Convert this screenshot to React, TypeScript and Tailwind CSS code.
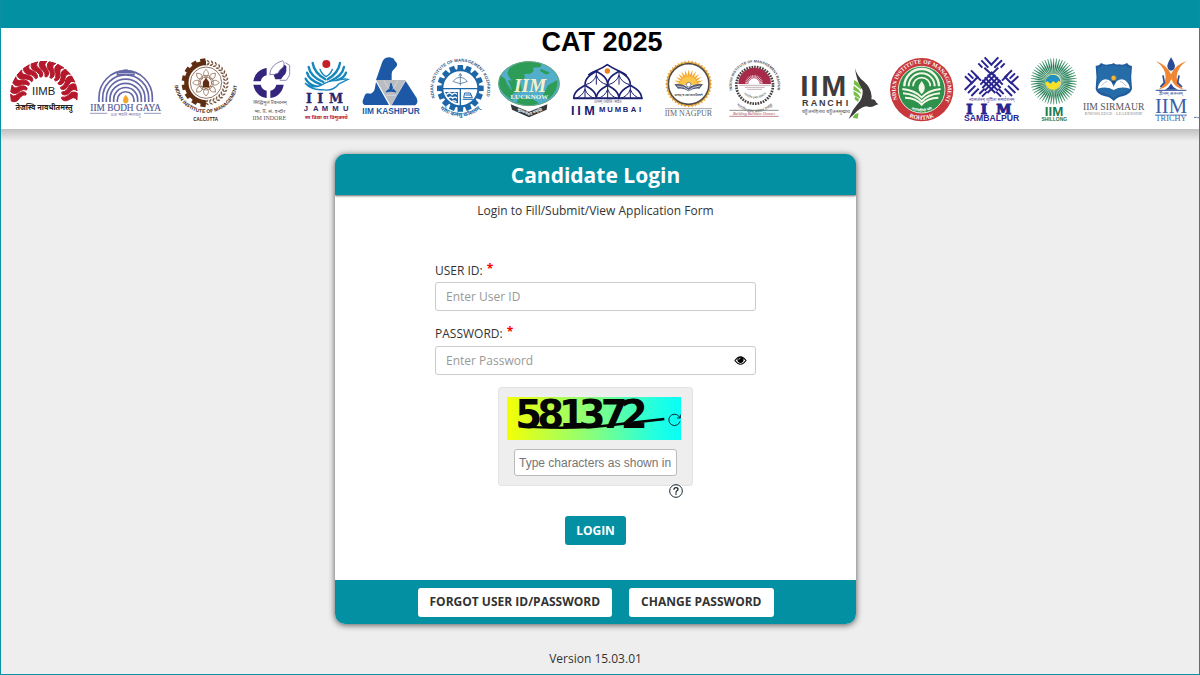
import { useState } from 'react';
import type { FormEvent, ReactNode } from 'react';

const DEV = '"Noto Sans", "Noto Sans Devanagari", sans-serif';
const SERIF = '"Liberation Serif", serif';
const SLAB = '"DejaVu Serif", serif';
const SANS = '"Liberation Sans", sans-serif';

const pt = (cx: number, cy: number, r: number, deg: number) => {
  const a = (deg * Math.PI) / 180;
  return `${(cx + r * Math.cos(a)).toFixed(1)} ${(cy + r * Math.sin(a)).toFixed(1)}`;
};

const range = (n: number) => Array.from({ length: n }, (_, i) => i);

/* Logo artwork is drawn at three units per pixel. */
function Logo({ x, w, label, children }: { x: number; w: number; label: string; children: ReactNode }) {
  return (
    <svg role="img" aria-label={label} viewBox={`${x} 108 ${w} 216`} width={w / 3} height={72} className="block shrink-0 overflow-visible">
      {children}
    </svg>
  );
}

function Bangalore() {
  return (
    <Logo x={3} w={246} label="IIM Bangalore">
      {range(13).map((i) => {
        const a = 176 + i * 15.7;
        return (
          <path
            key={i}
            fill="#b5172b"
            stroke="#b5172b"
            strokeWidth={3}
            strokeLinejoin="round"
            d={`M${pt(132, 224, 54, a + 9)} Q${pt(132, 224, 66, a + 17)} ${pt(132, 224, 80, a + 5)} Q${pt(132, 224, 92, a - 2)} ${pt(132, 224, 100, a + 5)} L${pt(132, 224, 100, a - 7)} Q${pt(132, 224, 86, a - 14)} ${pt(132, 224, 72, a - 2)} Q${pt(132, 224, 62, a + 5)} ${pt(132, 224, 54, a + 3)}Z`}
          />
        );
      })}
      <text x={131} y={226} fontSize={34} textAnchor="middle" fontFamily={SANS} fill="#222">IIMB</text>
      <text x={132} y={270} fontSize={22} fontWeight={700} textAnchor="middle" fontFamily={DEV} fill="#222">तेजस्वि नावधीतमस्तु</text>
    </Logo>
  );
}

function BodhGaya() {
  return (
    <Logo x={249} w={255} label="IIM Bodh Gaya">
      <g fill="none" stroke="#6467a5" strokeWidth={5}>
        {[80, 69, 58, 47, 36, 25].map((r) => (
          <path key={r} d={`M${377 - r} 246 V${244 - r * 0.15} A${r} ${r} 0 0 1 ${377 + r} ${244 - r * 0.15} V246`} />
        ))}
        <path d="M352 167 V158 H402 V167 M358 154 H396 M352 163 H402" strokeWidth={4} />
        <path d="M370 150 h14" strokeWidth={3} />
      </g>
      <path d="M377 224 C392 240 384 250 377 250 C369 250 364 240 377 224Z" fill="#f5a52b" />
      <text x={377} y={272} fontSize={28} textAnchor="middle" fontFamily={SERIF} fill="#54589a" stroke="#54589a" strokeWidth={0.5}>IIM BODH GAYA</text>
      <path d="M270 280 H322 M432 280 H483" stroke="#6467a5" strokeWidth={2} />
      <text x={377} y={288} fontSize={13} textAnchor="middle" fontFamily={DEV} fill="#7779ac">प्रज्ञा भवति स्मारयतु</text>
    </Logo>
  );
}

function Calcutta() {
  return (
    <Logo x={504} w={225} label="IIM Calcutta">
      <path d="M618 129 A59 59 0 0 0 618 247" fill="none" stroke="#5f2d12" strokeWidth={13} />
      {range(8).map((i) => (
        <rect key={i} x={-8} y={-73} width={16} height={14} fill="#5f2d12" transform={`translate(618 188) rotate(${-8 - i * 23.5})`} />
      ))}
      {range(17).map((i) => (
        <path key={i} d="M-3 -7 Q5 -8 7 1 Q-1 1 -3 -7 M-3 9 Q5 10 7 1 Q-1 1 -3 9" fill="#7b5a45" transform={`translate(618 188) rotate(${4 + i * 10.7}) translate(0 -61)`} />
      ))}
      <circle cx={618} cy={188} r={47} fill="none" stroke="#5f2d12" strokeWidth={2} />
      <g fill="none" stroke="#80583d" strokeWidth={2}>
        {range(8).map((i) => (
          <path key={i} d="M0 -16 Q-15 -26 0 -40 Q15 -26 0 -16" transform={`translate(618 188) rotate(${i * 45})`} />
        ))}
        <circle cx={618} cy={188} r={17} />
        <circle cx={618} cy={188} r={22} />
      </g>
      <path d="M609 202 v-16 l9 -12 l9 12 v16Z M613 173 h10" fill="#5f2d12" stroke="#5f2d12" />
      <path id="calcutta-ring" d="M523 184 A95 95 0 0 0 713 184" fill="none" />
      <text fontSize={15} fontWeight={700} fontFamily={SANS} fill="#3c2415">
        <textPath href="#calcutta-ring" startOffset="50%" textAnchor="middle">INDIAN INSTITUTE OF MANAGEMENT</textPath>
      </text>
      <text x={617} y={302} fontSize={14} fontWeight={700} textAnchor="middle" fontFamily={SANS} fill="#3c2415">CALCUTTA</text>
    </Logo>
  );
}

function Indore() {
  return (
    <Logo x={9} w={162} label="IIM Indore">
      <g fill="#35257c">
        <path d="M80 144 A46 46 0 0 0 40 184 H62 A24 24 0 0 1 80 166Z" />
        <path d="M40 194 A46 46 0 0 0 80 234 V212 A24 24 0 0 1 62 194Z" />
        <path d="M91 234 A46 46 0 0 0 131 194 H109 A24 24 0 0 1 91 212Z" />
      </g>
      <path d="M136 128 L149 136 V155 Q151 164 145 172 L139 181 H119" fill="#fff" stroke="#5b5092" strokeWidth={2} />
      <path d="M128 132 L139 138 V154 Q138 162 130 168 L123 178 H106 L101 165Z" fill="#35257c" />
      <path d="M89 164 Q91 133 128 122 L132 128 Q134 139 126 145 Q116 151 115 159 Q105 165 89 164Z" fill="#fff" stroke="#5b5092" strokeWidth={2} />
      <g textAnchor="middle" fill="#55555b">
        <text x={90} y={251} fontSize={15} fontFamily={DEV}>सिद्धिमूलं प्रबन्धनम्</text>
        <text x={90} y={279} fontSize={16} fontFamily={DEV}>भा. प्र. सं. इन्दौर</text>
        <text x={88} y={301} fontSize={18} fontFamily={SERIF}>IIM INDORE</text>
      </g>
    </Logo>
  );
}

function Jammu() {
  return (
    <Logo x={171} w={177} label="IIM Jammu">
      <circle cx={259} cy={132} r={12} fill="#c51f28" />
      <g fill="none" stroke="#1687bd" strokeWidth={7} strokeLinecap="round">
        <path d="M218 129 Q222 158 256 178" />
        <path d="M300 129 Q296 158 263 178" />
        <path d="M206 141 Q211 170 250 186" />
        <path d="M312 141 Q307 168 270 184" />
        <path d="M201 158 Q207 181 242 193" />
        <path d="M318 158 Q313 174 290 182" />
        <path d="M197 176 Q205 194 232 200" />
        <path d="M240 148 Q245 163 258 170 Q272 163 277 148" strokeWidth={4} />
      </g>
      <path d="M195 190 Q222 209 247 194 Q268 181 288 182 Q310 175 324 178 Q305 187 296 192 Q280 215 246 209 Q215 211 195 190Z" fill="#fff" stroke="#1687bd" strokeWidth={4} />
      <text x="198 232 267" y={248} fontSize={38} fontWeight={700} fontFamily={SLAB} fill="#29266d" stroke="#29266d" strokeWidth={1}>IIM</text>
      <text x="191 219 245 277 309" y={273} fontSize={23} fontWeight={700} fontFamily={SANS} fill="#29266d">JAMMU</text>
      <text x={259} y={296} fontSize={16} fontWeight={700} textAnchor="middle" fontFamily={DEV} fill="#b92228">सा विद्या या विमुक्तये</text>
    </Logo>
  );
}

function Kashipur() {
  return (
    <Logo x={348} w={207} label="IIM Kashipur">
      <path d="M408 180 H497 L453 258Z" fill="#b9bcc0" />
      <g fill="#1c58a5">
        <path d="M408 180 L427 125 Q433 112 448 112 Q464 115 464 122 Q474 129 470 139 L462 148 Q455 153 455 161 V180Z" />
        <path d="M408 186 L447 255 H374 Q365 250 369 239 L375 224 Q381 217 390 221 Q400 220 404 208Z" />
        <path d="M497 183 L530 234 Q536 248 526 256 H455 L470 229Z" />
        <path d="M453 189 Q452 208 438 216 Q453 210 468 216 Q455 207 453 189Z" stroke="#1c58a5" strokeWidth={4} />
      </g>
      <path d="M432 182 L448 208 M474 182 L458 208 M438 226 H468" stroke="#e4e5e7" strokeWidth={2} fill="none" />
      <text x={453} y={283} fontSize={25} fontWeight={700} textAnchor="middle" fontFamily={SANS} fill="#1c58a5">IIM KASHIPUR</text>
    </Logo>
  );
}

function Kozhikode() {
  return (
    <Logo x={555} w={207} label="IIM Kozhikode">
      {range(16).map((i) => (
        <path key={i} d="M-9 -54 L-8 -70 H8 L9 -54Z" fill="#1d67a8" transform={`translate(661 205) rotate(${i * 22.5})`} />
      ))}
      <circle cx={661} cy={205} r={54} fill="#fff" stroke="#1d67a8" strokeWidth={6} />
      <path d="M608 206 H714 M661 206 V258" stroke="#1d67a8" strokeWidth={4} />
      <path d="M638 185 Q660 158 683 185 M640 185 L661 191 L681 185 M661 163 V197 M656 168 L661 160 L666 168" fill="none" stroke="#2b5484" strokeWidth={2} />
      <path d="M615 216 h39 v34 q-28 -4 -39 -34Z" fill="#1d67a8" />
      <path d="M619 224 q10 -10 17 0 q9 -9 15 -1 M624 235 q8 -8 14 0 q7 -7 13 0 M634 246 q8 -7 15 0" fill="none" stroke="#fff" strokeWidth={4} />
      <path d="M671 233 L674 219 H691 L697 233Z M668 238 H699 M676 225 H693" fill="none" stroke="#1d67a8" strokeWidth={3} />
      <path id="kozhikode-top" d="M584 231 A81 81 0 1 1 738 231" fill="none" />
      <text fontSize={13} fontWeight={700} fontFamily={SANS} fill="#315b88">
        <textPath href="#kozhikode-top" startOffset="50%" textAnchor="middle">INDIAN INSTITUTE OF MANAGEMENT KOZHIKODE</textPath>
      </text>
      <path id="kozhikode-bottom" d="M574 225 A91 91 0 0 0 748 225" fill="none" />
      <text fontSize={17} fontWeight={700} fontFamily={DEV} fill="#1d67a8">
        <textPath href="#kozhikode-bottom" startOffset="50%" textAnchor="middle">योगः कर्मसु कौशलम्</textPath>
      </text>
    </Logo>
  );
}

function Lucknow() {
  return (
    <Logo x={42} w={216} label="IIM Lucknow">
      <path d="M92 253 L147 275 L202 253 L200 269 L147 292 L96 269Z" fill="#34383a" />
      <ellipse cx={147} cy={191} rx={92} ry={67} fill="#52aecb" />
      <path d="M88 145 Q120 120 150 125 L178 129 Q190 137 179 142 L158 143 Q166 154 151 161 L132 162 Q140 174 124 179 L99 185 Q86 173 82 158Z M60 165 L75 176 Q85 205 102 216 Q92 229 99 242 Q60 220 56 190Z M116 232 L158 237 L177 249 Q148 263 109 248Z M183 146 L210 158 L199 164 L180 153Z M204 196 L232 180 Q235 215 205 237 L187 229Z M84 180 L120 186 L126 214 L100 220Z" fill="#2d9c57" />
      <ellipse cx={147} cy={191} rx={91} ry={66} fill="none" stroke="#68a779" strokeWidth={3} />
      <text x={150} y={217} fontSize={58} fontWeight={700} fontStyle="italic" textAnchor="middle" fontFamily={SERIF} fill="#f8f1c8">IIM</text>
      <text x={148} y={238} fontSize={21} fontWeight={700} textAnchor="middle" fontFamily={SERIF} fill="#f1f6df">LUCKNOW</text>
      <path id="lucknow-ribbon" d="M100 266 L147 286 L198 266" fill="none" />
      <text fontSize={11} fontWeight={700} fontFamily={DEV} fill="#fff">
        <textPath href="#lucknow-ribbon" startOffset="50%" textAnchor="middle">सुप्रबन्धे राष्ट्र समृद्धि</textPath>
      </text>
    </Logo>
  );
}

function Mumbai() {
  const arches: [number, number][] = [[315, 236], [383, 236], [451, 236], [349, 194], [417, 194]];
  return (
    <Logo x={258} w={252} label="IIM Mumbai">
      <g fill="none" stroke="#1c2070" strokeWidth={5}>
        {arches.map(([x, y]) => (
          <g key={`${x}-${y}`}>
            <path d={`M${x - 34} ${y} C${x - 34} ${y - 22} ${x - 14} ${y - 32} ${x} ${y - 40} C${x + 14} ${y - 32} ${x + 34} ${y - 22} ${x + 34} ${y}`} />
            <path d={`M${x - 32} ${y} Q${x - 8} ${y - 6} ${x} ${y - 28} Q${x + 8} ${y - 6} ${x + 32} ${y} M${x} ${y - 40} V${y}`} strokeWidth={3} />
          </g>
        ))}
        <path d="M325 166 C334 154 358 152 382 134 C406 152 430 154 440 167" />
        <path d="M280 235 H488" strokeWidth={6} />
      </g>
      <circle cx={382} cy={153} r={8} fill="#f07d22" />
      <text x={383} y={250} fontSize={12} textAnchor="middle" fontFamily={DEV} fill="#5b5e8c">ज्ञानम् ज्योति: सर्वत्र</text>
      <text x="273 292 313" y={285} fontSize={38} fontWeight={700} fontFamily={SANS} fill="#1c2070">IIM</text>
      <text x="357 382 404 428 452 477" y={275} fontSize={23} fontWeight={700} fontFamily={SANS} fill="#1c2070">MUMBAI</text>
    </Logo>
  );
}

function Nagpur() {
  return (
    <Logo x={510} w={210} label="IIM Nagpur">
      {range(40).map((i) => (
        <path key={i} d="M-5 -63 L0 -71 L5 -63Z" fill="#e8a23a" transform={`translate(626 192) rotate(${i * 9})`} />
      ))}
      <circle cx={626} cy={192} r={61} fill="#fff" stroke="#514c46" strokeWidth={5} />
      <circle cx={626} cy={192} r={65} fill="none" stroke="#e8a23a" strokeWidth={3} />
      {range(13).map((i) => (
        <path key={i} d="M-5 -18 L0 -45 L5 -18Z" fill="#f5a82e" transform={`translate(626 193) rotate(${-90 + i * 15})`} />
      ))}
      <path d="M600 195 A26 26 0 0 1 652 195Z" fill="#fcc64a" />
      <path d="M583 193 Q607 189 625 204 Q645 189 669 193 L658 206 Q642 203 626 214 Q610 203 594 206Z" fill="#555b78" />
      <path d="M592 198 Q614 199 626 211 Q640 199 660 198" fill="none" stroke="#fff" strokeWidth={2} />
      <circle cx={626} cy={194} r={7} fill="#fff" stroke="#555b78" strokeWidth={2} />
      <text x={626} y={227} fontSize={9} fontWeight={700} textAnchor="middle" fontFamily={DEV} fill="#555">सत्यम् च स्वाध्यायप्रवचने</text>
      <path d="M555 266 H696" stroke="#777" strokeWidth={2} />
      <text x={625} y={287} fontSize={24} textAnchor="middle" fontFamily={SERIF} fill="#666668">IIM NAGPUR</text>
    </Logo>
  );
}

function Raipur() {
  return (
    <Logo x={0} w={210} label="IIM Raipur">
      <circle cx={104} cy={196} r={55} fill="none" stroke="#454040" strokeWidth={8} strokeDasharray="5 3" />
      <path d="M55 192 A49 49 0 0 1 153 192Z" fill="#a82a4b" />
      <g stroke="#fff" strokeWidth={2}>
        {range(17).map((i) => (
          <path key={i} d={`M${pt(102, 192, 17, 180 + i * 11.25)} L${pt(102, 192, 27, 180 + i * 11.25)}`} />
        ))}
      </g>
      <path d="M85 192 A17 17 0 0 1 119 192Z" fill="#fff" />
      <path d="M58 196 H151 M75 202 H134 M82 208 H126" stroke="#a58c94" strokeWidth={2} />
      <path id="raipur-motto" d="M61 207 A48 48 0 0 0 149 207" fill="none" />
      <text fontSize={10} fontFamily={DEV} fill="#666">
        <textPath href="#raipur-motto" startOffset="50%" textAnchor="middle">भारतीय प्रबंध संस्थान</textPath>
      </text>
      <path id="raipur-ring" d="M55 245 A69 69 0 1 1 153 245" fill="none" />
      <text fontSize={11} fontWeight={700} fontFamily={SANS} fill="#4c4c50">
        <textPath href="#raipur-ring" startOffset="50%" textAnchor="middle">INDIAN INSTITUTE OF MANAGEMENT RAIPUR</textPath>
      </text>
      <path id="raipur-ring-bottom" d="M40 243 A76 76 0 0 0 168 243" fill="none" />
      <text fontSize={12} fontFamily={DEV} fill="#4c4c50">
        <textPath href="#raipur-ring-bottom" startOffset="50%" textAnchor="middle">भारतीय प्रबंध संस्थान रायपुर</textPath>
      </text>
      <path d="M28 271 H176" stroke="#555" strokeWidth={2} />
      <path d="M28 289 H176" stroke="#a34a5c" strokeWidth={2} />
      <text x={102} y={284} fontSize={12} fontStyle="italic" textAnchor="middle" fontFamily={SERIF} fill="#a33d50">Building Business Owners</text>
    </Logo>
  );
}

function Ranchi() {
  return (
    <Logo x={210} w={285} label="IIM Ranchi">
      <path
        d="M405 144 Q411 169 431 184 Q454 204 455 230 L454 238 Q466 237 468 247 L475 253 L466 256 Q457 264 438 259 Q419 263 402 283 L386 297 L399 270 L412 253 Q430 235 428 211 Q409 183 405 144Z"
        fill="#3e3b3d"
      />
      <text x="241 271 304" y={229} fontSize={90} fontWeight={700} fontFamily={SANS} fill="#3e3b3d">IIM</text>
      <text x="246 272 297 322 347 377" y={257} fontSize={27} fontWeight={700} fontFamily={SANS} fill="#3e3b3d">RANCHI</text>
      <text x={318} y={278} fontSize={15} textAnchor="middle" fontFamily={DEV} fill="#55595c">बहुजनहिताय बहुजनसुखाय</text>
      <path d="M403 180 Q424 192 424 209 L401 192Z M401 197 Q422 211 424 222 L400 209Z M401 213 Q421 224 421 236 L401 225Z M405 229 L417 237 L414 246 L404 238Z M398 293 Q404 280 416 279 L413 296 Z" fill="#76bd43" />
    </Logo>
  );
}

function Rohtak() {
  return (
    <Logo x={495} w={225} label="IIM Rohtak">
      <circle cx={605} cy={209} r={95} fill="#c8373b" />
      <circle cx={605} cy={209} r={70} fill="#2e914c" stroke="#e5e8dc" strokeWidth={3} />
      <g fill="none" stroke="#f4f6e8">
        <path d="M553 199 A52 52 0 0 1 657 199" strokeWidth={7} />
        <path d="M566 199 A39 39 0 0 1 644 199" strokeWidth={6} />
        <path d="M579 199 A26 26 0 0 1 631 199" strokeWidth={5} />
        <path d="M547 207 Q585 211 605 232 Q625 211 662 207 M549 220 Q587 223 605 244 Q624 223 660 220 M555 233 Q588 234 605 254 Q622 234 655 233" strokeWidth={6} />
      </g>
      <path d="M605 183 Q624 206 605 223 Q586 206 605 183Z" fill="#f4f6e8" />
      <path id="rohtak-motto" d="M547 235 A62 62 0 0 0 663 235" fill="none" />
      <text fontSize={12} fontWeight={700} fontFamily={DEV} fill="#fff">
        <textPath href="#rohtak-motto" startOffset="50%" textAnchor="middle">आत्मदीपो भव</textPath>
      </text>
      <path id="rohtak-top" d="M534 241 A78 78 0 1 1 676 241" fill="none" />
      <text fontSize={17} fontWeight={700} fontFamily={SERIF} fill="#fff">
        <textPath href="#rohtak-top" startOffset="50%" textAnchor="middle">INDIAN INSTITUTE OF MANAGEMENT</textPath>
      </text>
      <path id="rohtak-bottom" d="M535 266 A90 90 0 0 0 675 266" fill="none" />
      <text fontSize={18} fontWeight={700} fontFamily={SERIF} fill="#fff">
        <textPath href="#rohtak-bottom" startOffset="50%" textAnchor="middle">ROHTAK</textPath>
      </text>
    </Logo>
  );
}

function Sambalpur() {
  return (
    <Logo x={30} w={192} label="IIM Sambalpur">
      <g stroke="#29258f" strokeWidth={6} fill="none">
        <path d="M97 180 L136 219 M104 172 L144 212 M113 164 L152 204 M122 156 L158 194" />
        <path d="M151 180 L112 219 M144 172 L104 212 M136 164 L97 204 M128 156 L91 194" />
        <path d="M85 130 L97 143 M94 121 L115 143 M104 112 L124 134 L145 112 M164 130 L152 143 M156 121 L133 143 M103 143 L124 163 M145 143 L124 164" />
        <path d="M63 151 L83 171 L63 192 M54 160 L70 176 M45 169 L65 188 M44 210 L66 188 M54 219 L76 197 M64 228 L86 206 M76 165 L93 182" />
        <path d="M186 151 L165 171 L186 192 M195 160 L179 176 M205 169 L184 188 M206 210 L184 188 M196 219 L174 197 M186 228 L164 206 M173 165 L156 182" />
        <path d="M88 222 L104 206 M96 230 L111 215 M161 222 L145 206 M153 230 L138 215" />
      </g>
      <text x={125} y={244} fontSize={13} textAnchor="middle" fontFamily={DEV} fill="#47449a">नवसर्जनम् शुचिता समावेशनम्</text>
      <text x="49 92 139" y={281} fontSize={41} fontWeight={700} fontFamily={SLAB} fill="#29258f" stroke="#29258f" strokeWidth={3}>IIM</text>
      <text x={125} y={303} fontSize={26} fontWeight={700} textAnchor="middle" fontFamily={SANS} fill="#29258f">SAMBALPUR</text>
    </Logo>
  );
}

function Shillong() {
  return (
    <Logo x={222} w={165} label="IIM Shillong">
      {range(48).map((i) => (
        <path key={i} d="M-1 -22 Q3 -44 0 -69 Q-4 -44 -1 -22Z" fill="#1c7a50" stroke="#1c7a50" transform={`translate(311 184) rotate(${i * 7.5})`} />
      ))}
      <circle cx={309} cy={186} r={23} fill="#f8df28" />
      <path d="M286 187 A23 23 0 0 1 332 187 L326 182 L318 190 L310 183 L301 191 L293 184Z" fill="#2190c5" />
      <text x={312} y={287} fontSize={40} fontWeight={700} textAnchor="middle" fontFamily={SANS} fill="#1c7a50">IIM</text>
      <text x={313} y={303} fontSize={15} fontWeight={700} textAnchor="middle" fontFamily={SANS} fill="#1c7a50">SHILLONG</text>
    </Logo>
  );
}

function Sirmaur() {
  return (
    <Logo x={387} w={213} label="IIM Sirmaur">
      <path d="M437 137 Q447 139 453 129 Q465 137 478 133 Q487 133 491 129 Q497 135 508 133 Q520 136 531 129 Q538 139 546 138 Q541 172 546 206 Q542 222 518 229 Q502 231 491 243 Q481 231 465 229 Q439 222 437 206 Q442 172 437 137Z" fill="#215c9c" />
      <path d="M443 143 Q453 144 458 136 Q475 142 491 136 Q509 142 526 136 Q532 144 540 144 V204 Q536 216 515 222 Q502 225 491 235 Q480 225 467 222 Q446 217 443 204Z" fill="#256ca9" />
      <path d="M443 206 Q448 180 466 178 Q484 178 491 200 Q498 178 516 178 Q534 180 540 206 Q512 198 491 210 Q470 198 443 206Z" fill="#fff" />
      <path d="M454 198 Q462 186 472 184 M528 198 Q520 186 510 184" fill="none" stroke="#b3c9dd" strokeWidth={3} />
      <path d="M486 190 V175 H496 V190Z" fill="#1b4c82" />
      <circle cx={491} cy={174} r={8} fill="#f6b633" stroke="#4b687e" strokeWidth={2} />
      <text x={491} y={269} fontSize={29} textAnchor="middle" fontFamily={SERIF} fill="#55565a">IIM SIRMAUR</text>
      <text x={491} y={285} fontSize={13} textAnchor="middle" fontFamily={SERIF} fill="#8a8a8f">KNOWLEDGE · LEADERSHIP</text>
    </Logo>
  );
}

function Trichy() {
  return (
    <Logo x={600} w={120} label="IIM Trichy">
      <path d="M663 112 Q681 139 672 148 Q663 156 655 148 Q646 139 663 112Z" fill="#2b4b96" />
      <path d="M618 124 Q650 134 663 163 Q676 134 709 124 Q681 143 680 172 Q683 195 701 209 Q672 202 664 177 Q655 202 625 209 Q645 195 647 172 Q647 144 618 124Z" fill="#f08532" />
      <path d="M639 166 L643 188 L631 201 M687 166 L683 188 L696 201" fill="none" stroke="#2b4b96" strokeWidth={5} />
      <path d="M645 209 Q657 204 663 190 Q669 204 684 209Z" fill="#2b4b96" />
      <path d="M617 211 H709" stroke="#2b4b96" strokeWidth={3} />
      <text x={663} y={226} fontSize={14} textAnchor="middle" fontFamily={DEV} fill="#39549b">ज्ञानम् अनन्तम्</text>
      <text x={663} y={280} fontSize={62} textAnchor="middle" fontFamily={SERIF} fill="#3b5fa8">IIM</text>
      <path d="M615 285 H711" stroke="#3b5fa8" strokeWidth={2} />
      <text x={663} y={303} fontSize={25} textAnchor="middle" fontFamily={SERIF} fill="#3b5fa8">TRICHY</text>
    </Logo>
  );
}

function PartnerMark() {
  return (
    <Logo x={720} w={27} label="IIM Udaipur">
      <path d="M732 292 H740 M742 293 H747" stroke="#536f91" strokeWidth={3} />
    </Logo>
  );
}

function CaptchaImage() {
  return (
    <svg role="img" aria-label="Captcha" viewBox="0 0 522 129" className="block h-[43px] w-full overflow-visible">
      <defs>
        <linearGradient id="captcha-bg" x1="0" x2="1" y1="0" y2="0">
          <stop offset="0" stopColor="#f4ff05" />
          <stop offset="0.5" stopColor="#84ff80" />
          <stop offset="0.85" stopColor="#22ffe0" />
          <stop offset="1" stopColor="#08fff6" />
        </linearGradient>
      </defs>
      <rect width="522" height="129" fill="url(#captcha-bg)" />
      <text x="25 91 155 215 281 341" y="94" fontSize={116} fontWeight={700} fontFamily='"DejaVu Sans", sans-serif' fill="#050505">581372</text>
      <path d="M36 88 Q200 98 315 84 L472 66" fill="none" stroke="#050505" strokeWidth={7} />
    </svg>
  );
}

function EyeIcon() {
  return (
    <svg viewBox="0 0 36 26" width={13} height={9} aria-hidden="true">
      <path d="M2 13 Q18 -9 34 13 Q18 35 2 13Z" fill="none" stroke="currentColor" strokeWidth={3} />
      <circle cx={18} cy={11} r={9} fill="currentColor" />
      <path d="M13 11 Q13 6 18 6" fill="none" stroke="#fff" strokeWidth={2} />
    </svg>
  );
}

const field =
  'block h-[29px] w-full rounded-[3px] border border-[#ccc] bg-white pl-[10px] text-[12px] text-[#333] outline-none placeholder:text-[#999] focus:border-[#0490a3]';

export default function App() {
  const [showPassword, setShowPassword] = useState(false);
  const submit = (e: FormEvent) => e.preventDefault();

  return (
    <div className="flex min-h-screen flex-col border-x border-b border-[#0b8fa2] bg-[#eee] font-['Open_Sans',sans-serif] text-[12px] text-[#333]">
      <header>
        <div className="h-7 bg-[#0490a3]" />
        <div className="overflow-hidden bg-white">
          <h1 className="pl-1 text-center font-['Liberation_Sans',sans-serif] text-[27px] leading-7 font-bold text-black">CAT 2025</h1>
          <div className="flex justify-between pb-px">
            <Bangalore />
            <BodhGaya />
            <Calcutta />
            <Indore />
            <Jammu />
            <Kashipur />
            <Kozhikode />
            <Lucknow />
            <Mumbai />
            <Nagpur />
            <Raipur />
            <Ranchi />
            <Rohtak />
            <Sambalpur />
            <Shillong />
            <Sirmaur />
            <Trichy />
            <PartnerMark />
          </div>
        </div>
        <div className="h-3 bg-gradient-to-b from-[#c0c0c0] to-[#eee]" />
      </header>

      <main className="mt-[13px] flex flex-1 flex-col items-center pr-[9px]">
        <form onSubmit={submit} className="w-full max-w-[521px] overflow-hidden rounded-[10px] bg-white shadow-[0_1px_6px_rgba(0,0,0,0.65)]">
          <h2 className="relative bg-[#0490a3] pt-px text-center text-[21px] leading-10 font-bold text-white shadow-[0_1px_2px_rgba(0,0,0,0.6)]">Candidate Login</h2>
          <p className="pt-2 text-center leading-4">Login to Fill/Submit/View Application Form</p>

          <div className="mx-auto flex max-w-[321px] flex-col pt-[42px]">
            <label htmlFor="user-id" className="flex h-5 items-center gap-1">
              USER ID: <span className="pb-1 text-[12px] leading-4 font-bold text-[#f00]">*</span>
            </label>
            <input id="user-id" type="text" placeholder="Enter User ID" className={`mt-px ${field}`} />

            <label htmlFor="password" className="mt-[13px] flex h-5 items-center gap-1">
              PASSWORD: <span className="pb-1 text-[12px] leading-4 font-bold text-[#f00]">*</span>
            </label>
            <div className="relative mt-0.5">
              <input id="password" type={showPassword ? 'text' : 'password'} placeholder="Enter Password" className={field} />
              <button
                type="button"
                aria-label="Show password"
                onClick={() => setShowPassword(!showPassword)}
                className="absolute inset-y-0 right-[9px] flex items-center text-black"
              >
                <EyeIcon />
              </button>
            </div>
          </div>

          <div className="mx-auto mt-3 w-[195px]">
            <div className="rounded-[3px] border border-[#e3e3e3] bg-[#eee] px-2 py-[9px]">
              <div className="relative pr-[3px]">
                <CaptchaImage />
                <button type="button" aria-label="Refresh captcha" className="absolute top-4 right-0.5 text-[#123]">
                  <svg viewBox="0 0 42 42" width={14} height={14} fill="none" stroke="currentColor" strokeWidth={3}>
                    <path d="M36 25 A17 17 0 1 1 32 9 L37 15 M37 5 V15 H27" />
                  </svg>
                </button>
              </div>
              <input
                type="text"
                aria-label="Captcha characters"
                placeholder="Type characters as shown in"
                className="mt-[9px] ml-[7px] block h-[27px] w-[163px] rounded-[3px] border border-[#bbb] bg-white px-1 font-['Liberation_Sans',sans-serif] text-[12px] outline-none placeholder:text-[#757575]"
              />
            </div>
            <div className="flex justify-end pr-[10px]">
              <button type="button" aria-label="Captcha help" className="-mt-0.5 block text-[#1a2a33]">
                <svg viewBox="0 0 42 42" width={14} height={14} className="block" fill="none" stroke="currentColor" strokeWidth={3}>
                  <circle cx={21} cy={21} r={19} />
                  <path d="M15 17 Q15 11 21 11 Q27 11 27 16 Q27 19 23 21 Q21 22 21 26" strokeWidth={4} />
                  <path d="M21 28 V32" strokeWidth={4} />
                </svg>
              </button>
            </div>
          </div>

          <div className="flex justify-center pt-[18px] pb-[35px]">
            <button type="submit" className="h-[29px] rounded-[3px] bg-[#0490a3] px-[11px] font-bold text-white">LOGIN</button>
          </div>

          <div className="flex h-11 items-center justify-center gap-[17px] bg-[#0490a3]">
            <button type="button" className="h-[29px] rounded-[3px] bg-white px-3 font-bold">FORGOT USER ID/PASSWORD</button>
            <button type="button" className="h-[29px] rounded-[3px] bg-white px-3 font-bold">CHANGE PASSWORD</button>
          </div>
        </form>
        <p className="pt-[27px] leading-4">Version 15.03.01</p>
      </main>
    </div>
  );
}
